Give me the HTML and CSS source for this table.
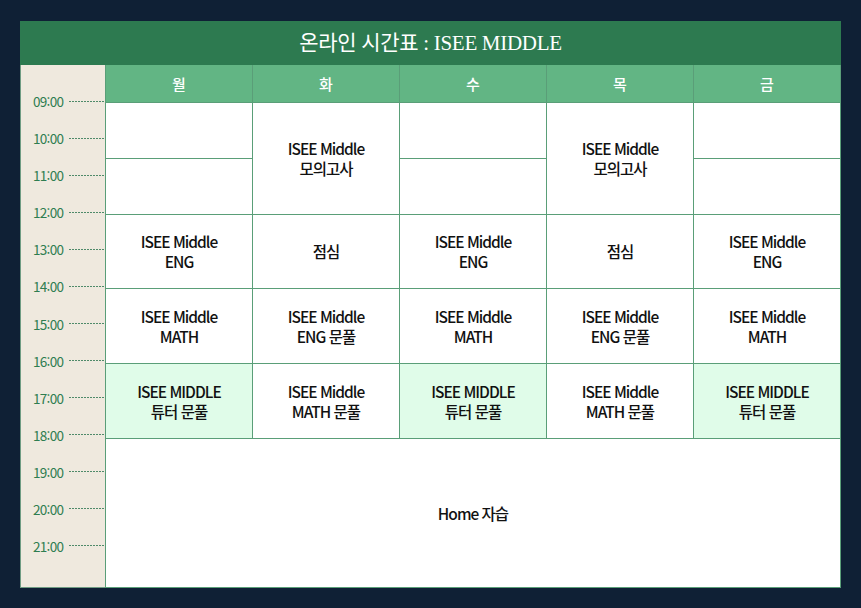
FILE: index.html
```html
<!DOCTYPE html>
<html lang="ko">
<head>
<meta charset="utf-8">
<title>온라인 시간표</title>
<link rel="stylesheet" href="styles.css">
</head>
<body>
<div class="board">
  <div class="title">온라인 시간표 : ISEE MIDDLE</div>
  <div class="body">
    <div class="times">
      <div class="time"><span>09:00</span><i></i></div>
      <div class="time"><span>10:00</span><i></i></div>
      <div class="time"><span>11:00</span><i></i></div>
      <div class="time"><span>12:00</span><i></i></div>
      <div class="time"><span>13:00</span><i></i></div>
      <div class="time"><span>14:00</span><i></i></div>
      <div class="time"><span>15:00</span><i></i></div>
      <div class="time"><span>16:00</span><i></i></div>
      <div class="time"><span>17:00</span><i></i></div>
      <div class="time"><span>18:00</span><i></i></div>
      <div class="time"><span>19:00</span><i></i></div>
      <div class="time"><span>20:00</span><i></i></div>
      <div class="time"><span>21:00</span><i></i></div>
    </div>
    <div class="table">
      <div class="head c1">월</div>
      <div class="head c2">화</div>
      <div class="head c3">수</div>
      <div class="head c4">목</div>
      <div class="head c5">금</div>

      <div class="cell c1 r1"></div>
      <div class="cell c1 r2"></div>
      <div class="cell c2 r12">ISEE Middle<br>모의고사</div>
      <div class="cell c3 r1"></div>
      <div class="cell c3 r2"></div>
      <div class="cell c4 r12">ISEE Middle<br>모의고사</div>
      <div class="cell c5 r1"></div>
      <div class="cell c5 r2"></div>

      <div class="cell c1 r3">ISEE Middle<br>ENG</div>
      <div class="cell c2 r3">점심</div>
      <div class="cell c3 r3">ISEE Middle<br>ENG</div>
      <div class="cell c4 r3">점심</div>
      <div class="cell c5 r3">ISEE Middle<br>ENG</div>

      <div class="cell c1 r4">ISEE Middle<br>MATH</div>
      <div class="cell c2 r4">ISEE Middle<br>ENG 문풀</div>
      <div class="cell c3 r4">ISEE Middle<br>MATH</div>
      <div class="cell c4 r4">ISEE Middle<br>ENG 문풀</div>
      <div class="cell c5 r4">ISEE Middle<br>MATH</div>

      <div class="cell mint c1 r5">ISEE MIDDLE<br>튜터 문풀</div>
      <div class="cell c2 r5">ISEE Middle<br>MATH 문풀</div>
      <div class="cell mint c3 r5">ISEE MIDDLE<br>튜터 문풀</div>
      <div class="cell c4 r5">ISEE Middle<br>MATH 문풀</div>
      <div class="cell mint c5 r5">ISEE MIDDLE<br>튜터 문풀</div>

      <div class="cell home">Home 자습</div>
    </div>
  </div>
</div>
</body>
</html>
```

FILE: styles.css
```css
html, body {
  margin: 0;
  padding: 0;
}
body {
  background: #0f2035;
  width: 861px;
  height: 608px;
  overflow: hidden;
  font-family: "Noto Sans CJK KR", "Noto Sans", sans-serif;
}
.board {
  margin: 21px 0 0 20px;
  width: 821px;
}
.title {
  height: 44px;
  background: #2d7a50;
  color: #fff;
  font-family: "Liberation Serif", "Noto Sans CJK KR", serif;
  font-size: 21px;
  line-height: 44px;
  text-align: center;
  letter-spacing: -0.3px;
}
.body {
  display: grid;
  grid-template-columns: 85px 736px;
  height: 523px;
}
.times {
  background: #efe9de;
  border-left: 1px solid #6f9c83;
  border-bottom: 1px solid #6f9c83;
  padding-top: 17.5px;
  box-sizing: border-box;
}
.time {
  height: 37.08px;
  display: flex;
  align-items: center;
  padding-left: 12px;
  gap: 6px;
}
.time span {
  font-size: 13.5px;
  color: #2e7d50;
  letter-spacing: -0.7px;
  width: 30px;
  white-space: nowrap;
}
.time i {
  flex: 1;
  height: 1px;
  background: repeating-linear-gradient(to right, #4f8a69 0 2px, transparent 2px 3px);
}
.table {
  background: #5a9e78;
  padding: 0 1px 1px 1px;
  display: grid;
  grid-template-columns: repeat(5, 146px);
  grid-template-rows: 37px 55px 55px 73px 74px 74px 148px;
  gap: 1px;
}
.head {
  grid-row: 1;
  background: #62b584;
  color: #fff;
  font-size: 15px;
  font-weight: 500;
  display: flex;
  align-items: center;
  justify-content: center;
}
.cell {
  background: #fff;
  color: #111;
  font-size: 15.5px;
  font-weight: 500;
  line-height: 20px;
  letter-spacing: -1px;
  display: flex;
  align-items: center;
  justify-content: center;
  text-align: center;
  padding-bottom: 1px;
}
.mint { background: #e0fce9; }
.c1 { grid-column: 1; }
.c2 { grid-column: 2; }
.c3 { grid-column: 3; }
.c4 { grid-column: 4; }
.c5 { grid-column: 5; }
.r1 { grid-row: 2; }
.r2 { grid-row: 3; }
.r12 { grid-row: 2 / span 2; }
.r3 { grid-row: 4; }
.r4 { grid-row: 5; }
.r5 { grid-row: 6; }
.home {
  grid-row: 7;
  grid-column: 1 / span 5;
}
```
